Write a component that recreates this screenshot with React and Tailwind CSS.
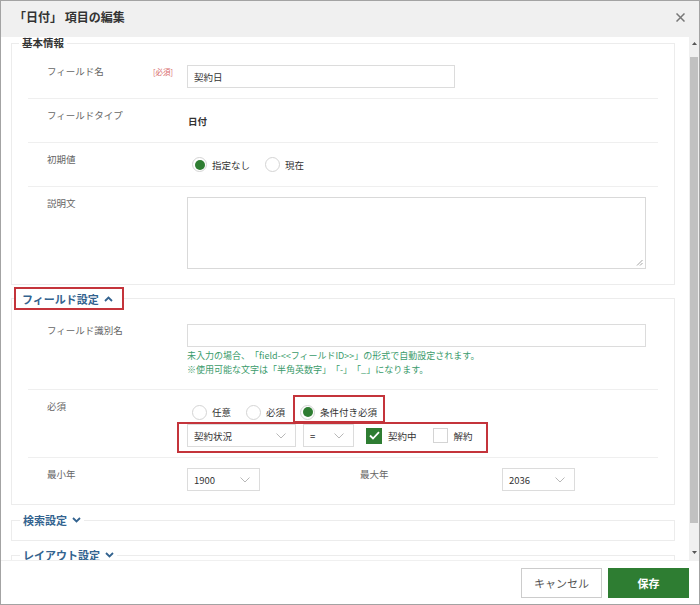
import React from "react";

function Chevron({ color = "#b8b8b8" }) {
  return (
    <svg width="10" height="6" viewBox="0 0 10 6" fill="none">
      <path d="M0.5 0.5 L5 5 L9.5 0.5" stroke={color} strokeWidth="1" />
    </svg>
  );
}

function BlueChevron({ up }) {
  return (
    <svg width="9" height="6" viewBox="0 0 9 6" fill="none">
      {up ? (
        <path d="M1 5 L4.5 1.5 L8 5" stroke="#33638f" strokeWidth="1.8" />
      ) : (
        <path d="M1 1 L4.5 4.5 L8 1" stroke="#33638f" strokeWidth="1.8" />
      )}
    </svg>
  );
}

function Select({ value, w }) {
  return (
    <div className={`flex h-[23px] items-center justify-between border border-[#dcdcdc] bg-white pl-[6px] pr-[9px] ${w}`}>
      <span className="leading-[12px]">{value}</span>
      <Chevron />
    </div>
  );
}

function Radio({ checked, label, boxed }) {
  return (
    <span className="relative flex items-center gap-[5px]">
      <span className="flex h-[15px] w-[15px] items-center justify-center rounded-full border border-[#d4d4d4] bg-white">
        {checked && <span className="h-[10px] w-[10px] rounded-full bg-[#2e7d32]" />}
      </span>
      <span className="leading-[12px]">{label}</span>
      {boxed && (
        <span className="pointer-events-none absolute left-[-7px] top-[-10px] h-[28px] w-[92px] border-2 border-[#c4343b]" />
      )}
    </span>
  );
}

function Checkbox({ checked, label }) {
  return (
    <span className="flex items-center gap-[6px]">
      {checked ? (
        <span className="flex h-[16px] w-[16px] items-center justify-center bg-[#2e7d32]">
          <svg width="11" height="9" viewBox="0 0 11 9" fill="none">
            <path d="M1 4.5 L4 7.5 L10 1.2" stroke="#fff" strokeWidth="1.8" />
          </svg>
        </span>
      ) : (
        <span className="h-[15px] w-[15px] border border-[#d4d4d4] bg-white" />
      )}
      <span className="leading-[12px]">{label}</span>
    </span>
  );
}

function Label({ children, req }) {
  return (
    <div className="flex w-[140px] shrink-0">
      <div className="w-[106px] leading-[12px] text-[#666]">{children}</div>
      {req && <div className="pt-[1px] text-[7.5px] leading-[12px] text-[#d86a6a]">[必須]</div>}
    </div>
  );
}

function Row({ label, req, children, last }) {
  return (
    <div className={`flex py-[10px] pl-[19px] ${last ? "" : "border-b border-[#efefef]"}`}>
      <Label req={req}>{label}</Label>
      <div className="flex flex-col">{children}</div>
    </div>
  );
}

export default function App() {
  return (
    <div className="flex h-[605px] w-[700px] flex-col overflow-hidden border border-[#a3a3a3] bg-white font-['Noto_Sans_CJK_JP',sans-serif] text-[9.5px] text-[#333] [text-spacing-trim:space-all]">
      {/* Header */}
      <div className="flex h-[36px] shrink-0 items-center justify-between bg-[#f0f0f0] pb-[4px] pl-[13px] pr-[14px]">
        <div className="text-[12px] font-bold leading-[14px] text-[#333]">「日付」 項目の編集</div>
        <svg width="9" height="9" viewBox="0 0 9 9" fill="none">
          <path d="M0.5 0.5 L8.5 8.5 M8.5 0.5 L0.5 8.5" stroke="#777" strokeWidth="1.5" />
        </svg>
      </div>

      {/* Body */}
      <div className="flex h-[523px] shrink-0">
        <div className="flex-1 overflow-hidden">
          {/* 基本情報 */}
          <fieldset className="ml-[10px] mr-[14px] border border-[#ececec] px-[16px] pb-[5px] pt-[6px]">
            <legend className="ml-[-9px] px-[3px] text-[10.5px] font-bold leading-[12px] text-[#333]">基本情報</legend>
            <Row label="フィールド名" req>
              <div className="flex h-[23px] w-[268px] items-center border border-[#dcdcdc] pl-[6px] leading-[12px]">契約日</div>
            </Row>
            <Row label="フィールドタイプ">
              <div className="flex h-[23px] items-center pl-[1px] font-bold leading-[12px]">日付</div>
            </Row>
            <Row label="初期値">
              <div className="flex h-[23px] items-center gap-[15px] pl-[5px]">
                <Radio checked label="指定なし" />
                <Radio label="現在" />
              </div>
            </Row>
            <Row label="説明文" last>
              <div className="flex h-[72px] w-[459px] items-end justify-end border border-[#d9d9d9] p-[2px]">
                <svg width="7" height="7" viewBox="0 0 7 7" fill="none">
                  <path d="M6.5 1 L1 6.5 M6.5 4 L4 6.5" stroke="#999" strokeWidth="0.9" />
                </svg>
              </div>
            </Row>
          </fieldset>

          {/* フィールド設定 */}
          <fieldset className="ml-[10px] mr-[14px] mt-[2px] border border-[#ececec] px-[16px] pb-[3px] pt-[4px]">
            <legend className="ml-[-14px]">
              <span className="flex h-[23px] items-center gap-[5px] border-2 border-[#c4343b] pl-[6px] pr-[9px] text-[11px] font-bold leading-[12px] text-[#33638f]">
                フィールド設定
                <BlueChevron up />
              </span>
            </legend>
            <div className="flex border-b border-[#efefef] pb-[12px] pl-[19px] pt-[10px]">
              <Label>フィールド識別名</Label>
              <div className="flex flex-col">
                <div className="h-[23px] w-[459px] border border-[#dcdcdc]" />
                <div className="mt-[2px] text-[9px] leading-[14px] text-[#3a9b6b]">
                  <div>未入力の場合、「field-&lt;&lt;フィールドID&gt;&gt;」の形式で自動設定されます。</div>
                  <div>※使用可能な文字は「半角英数字」「-」「_」になります。</div>
                </div>
              </div>
            </div>
            <div className="flex border-b border-[#efefef] py-[10px] pl-[19px]">
              <Label>必須</Label>
              <div className="flex flex-col">
                <div className="flex h-[24px] items-center gap-[15px] pl-[5px]">
                  <Radio label="任意" />
                  <Radio label="必須" />
                  <Radio checked label="条件付き必須" boxed />
                </div>
                <div className="relative flex h-[23px] items-center">
                  <Select value="契約状況" w="w-[109px]" />
                  <div className="ml-[7px]">
                    <Select value="=" w="w-[51px]" />
                  </div>
                  <div className="ml-[12px]">
                    <Checkbox checked label="契約中" />
                  </div>
                  <div className="ml-[16px]">
                    <Checkbox label="解約" />
                  </div>
                  <span className="pointer-events-none absolute left-[-10px] top-[-2px] h-[31px] w-[311px] border-2 border-[#c4343b]" />
                </div>
              </div>
            </div>
            <div className="flex py-[10px] pl-[19px]">
              <div className="flex w-[313px]">
                <Label>最小年</Label>
                <Select value="1900" w="w-[73px]" />
              </div>
              <div className="flex">
                <div className="w-[142px] leading-[12px] text-[#666]">最大年</div>
                <Select value="2036" w="w-[73px]" />
              </div>
            </div>
          </fieldset>

          {/* 検索設定 */}
          <fieldset className="ml-[10px] mr-[14px] mt-[8px] border border-[#ececec]">
            <legend className="ml-[8px] px-[3px]">
              <span className="flex items-center gap-[5px] text-[11px] font-bold leading-[14px] text-[#33638f]">
                検索設定
                <BlueChevron />
              </span>
            </legend>
            <div className="h-[13px]" />
          </fieldset>

          {/* レイアウト設定 */}
          <fieldset className="ml-[10px] mr-[14px] mt-[7px] border border-[#ececec]">
            <legend className="ml-[8px] px-[3px]">
              <span className="flex items-center gap-[5px] text-[11px] font-bold leading-[14px] text-[#33638f]">
                レイアウト設定
                <BlueChevron />
              </span>
            </legend>
            <div className="h-[30px]" />
          </fieldset>
        </div>

        {/* Scrollbar */}
        <div className="flex w-[10px] shrink-0 flex-col bg-[#f0f0f0]">
          <div className="flex h-[18px] justify-center pt-[5px]">
            <svg width="5" height="3" viewBox="0 0 5 3">
              <polygon points="2.5,0 5,3 0,3" fill="#555" />
            </svg>
          </div>
          <div className="mx-[1px] mt-[2px] h-[466px] bg-[#c1c1c1]" />
          <div className="flex flex-1 items-end justify-center pb-[6px]">
            <svg width="5" height="3" viewBox="0 0 5 3">
              <polygon points="0,0 5,0 2.5,3" fill="#555" />
            </svg>
          </div>
        </div>
      </div>

      {/* Footer */}
      <div className="flex flex-1 items-start justify-end gap-[6px] border-t border-[#f0f0f0] pr-[10px] pt-[7px]">
        <div className="flex h-[30px] w-[81px] items-center justify-center border border-[#cccccc] bg-white text-[11px] leading-[14px] text-[#555]">
          キャンセル
        </div>
        <div className="flex h-[30px] w-[81px] items-center justify-center bg-[#2e7d32] text-[11px] font-bold leading-[14px] text-white">
          保存
        </div>
      </div>
    </div>
  );
}
